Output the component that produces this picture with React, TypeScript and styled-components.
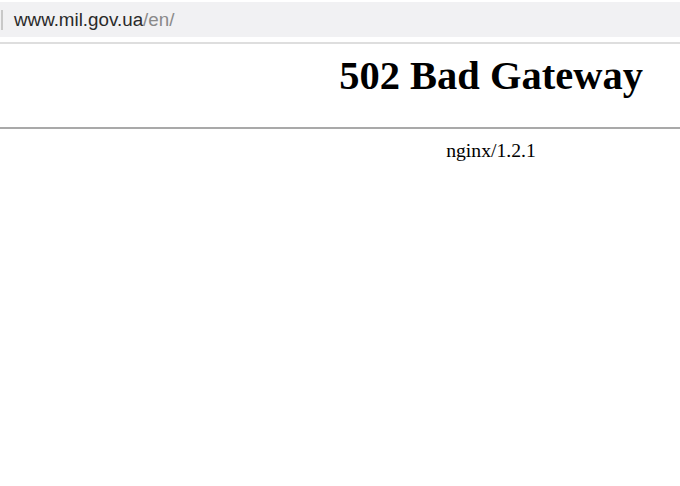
import React from "react";
import styled, { createGlobalStyle } from "styled-components";

const Global = createGlobalStyle`
  html, body { margin: 0; padding: 0; background: #fff; }
  body { width: 680px; height: 486px; overflow: hidden; }
`;

const Page = styled.div`
  width: 680px;
  height: 486px;
  background: #fff;
  display: flex;
  flex-direction: column;
`;

const Chrome = styled.div`
  padding: 2px 0 5px;
  border-bottom: 2px solid #dedede;
  background: #fff;
`;

const UrlBar = styled.div`
  height: 35px;
  background: #f1f1f3;
  display: flex;
  align-items: center;
  gap: 11px;
  padding-left: 1px;
`;

const Divider = styled.span`
  width: 2px;
  height: 20px;
  background: #c8c8c8;
`;

const Url = styled.span`
  font-family: "Liberation Sans", Arial, sans-serif;
  font-size: 18.8px;
  color: #2a2a2a;
`;

const UrlPath = styled.span`
  color: #8a8a8a;
`;

const Content = styled.div`
  padding-left: 302px;
  font-family: "Liberation Serif", "Times New Roman", serif;
  color: #000;
`;

const Title = styled.h1`
  margin: 9px 0 0;
  text-align: center;
  font-size: 40.5px;
  font-weight: bold;
  line-height: 46px;
`;

const Rule = styled.hr`
  margin: 28px 0 0;
  border: none;
  height: 2px;
  background: #a9a9a9;
`;

const Footer = styled.div`
  margin-top: 9px;
  text-align: center;
  font-size: 19.7px;
  line-height: 24px;
`;

export default function App() {
  return (
    <Page>
      <Global />
      <Chrome>
        <UrlBar>
          <Divider />
          <Url>
            www.mil.gov.ua<UrlPath>/en/</UrlPath>
          </Url>
        </UrlBar>
      </Chrome>
      <Content>
        <Title>502 Bad Gateway</Title>
      </Content>
      <Rule />
      <Content>
        <Footer>nginx/1.2.1</Footer>
      </Content>
    </Page>
  );
}
